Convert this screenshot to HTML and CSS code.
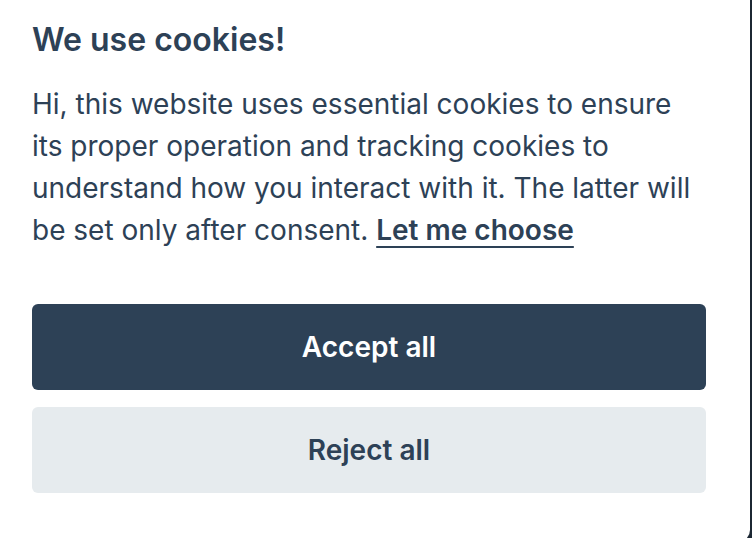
FILE: index.html
```html
<!DOCTYPE html>
<html lang="en">
<head>
<meta charset="utf-8">
<title>Cookie consent</title>
<link rel="stylesheet" href="styles.css">
</head>
<body>
<div class="card">
  <h1 class="title">We use cookies!</h1>
  <p class="desc">Hi, this website uses essential cookies to ensure its proper operation and tracking cookies to understand how you interact with it. The latter will be set only after consent. <a class="link" href="#">Let me choose</a></p>
  <div class="actions">
    <button class="btn btn-primary">Accept all</button>
    <button class="btn btn-secondary">Reject all</button>
  </div>
</div>
</body>
</html>
```
FILE: styles.css
```css
html, body {
  margin: 0;
  padding: 0;
}
body {
  background: #1c2733;
  width: 752px;
  height: 538px;
  overflow: hidden;
  font-family: Inter, "Noto Sans", sans-serif;
  color: #2d4156;
}
.card {
  box-sizing: border-box;
  width: 750px;
  height: 542px;
  background: #fff;
  border-bottom-right-radius: 12px;
  padding: 21px 44px 0 32px;
}
.title {
  margin: 0;
  font-size: 32px;
  line-height: 38px;
  font-weight: 600;
  color: #2d4156;
}
.desc {
  margin: 24px 0 0;
  font-size: 28px;
  line-height: 42px;
  font-weight: 400;
  color: #2d4156;
}
.link {
  color: #2d4156;
  font-weight: 600;
  text-decoration: underline;
  text-decoration-thickness: 2px;
  text-underline-offset: 6px;
}
.actions {
  display: flex;
  flex-direction: column;
  gap: 17px;
  margin-top: 53px;
}
.btn {
  height: 86px;
  border: 0;
  border-radius: 6px;
  font-family: inherit;
  font-size: 28px;
  font-weight: 600;
  cursor: pointer;
}
.btn-primary {
  background: #2d4156;
  color: #fff;
}
.btn-secondary {
  background: #e6ebee;
  color: #2d4156;
}
```
